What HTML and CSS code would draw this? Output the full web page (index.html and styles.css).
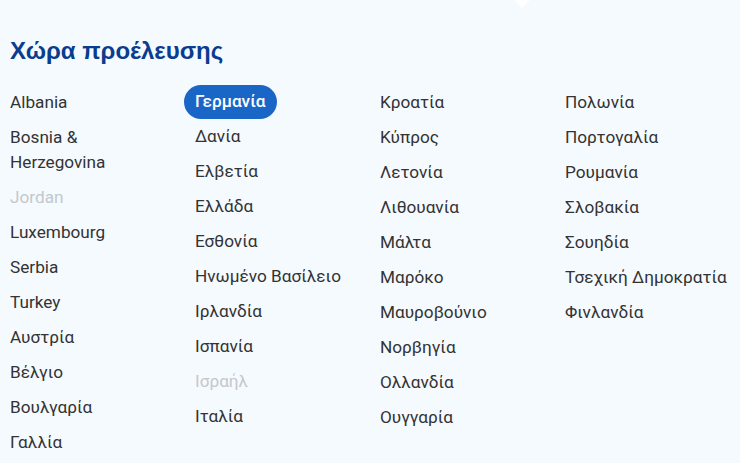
FILE: index.html
```html
<!DOCTYPE html>
<html lang="el">
  <head>
    <meta charset="UTF-8" />
    <meta name="viewport" content="width=device-width, initial-scale=1.0" />
    <title>Χώρα προέλευσης</title>
    <link rel="stylesheet" href="styles.css">
  </head>
  <body>
    <div class="panel">
      <span class="arrow"></span>
      <h2 class="title">Χώρα προέλευσης</h2>
      <div class="countries">
        <ul class="col">
          <li class="item">Albania</li>
          <li class="item">Bosnia &amp; Herzegovina</li>
          <li class="item disabled">Jordan</li>
          <li class="item">Luxembourg</li>
          <li class="item">Serbia</li>
          <li class="item">Turkey</li>
          <li class="item">Αυστρία</li>
          <li class="item">Βέλγιο</li>
          <li class="item">Βουλγαρία</li>
          <li class="item">Γαλλία</li>
        </ul>
        <ul class="col">
          <li class="item active">Γερμανία</li>
          <li class="item">Δανία</li>
          <li class="item">Ελβετία</li>
          <li class="item">Ελλάδα</li>
          <li class="item">Εσθονία</li>
          <li class="item">Ηνωμένο Βασίλειο</li>
          <li class="item">Ιρλανδία</li>
          <li class="item">Ισπανία</li>
          <li class="item disabled">Ισραήλ</li>
          <li class="item">Ιταλία</li>
        </ul>
        <ul class="col">
          <li class="item">Κροατία</li>
          <li class="item">Κύπρος</li>
          <li class="item">Λετονία</li>
          <li class="item">Λιθουανία</li>
          <li class="item">Μάλτα</li>
          <li class="item">Μαρόκο</li>
          <li class="item">Μαυροβούνιο</li>
          <li class="item">Νορβηγία</li>
          <li class="item">Ολλανδία</li>
          <li class="item">Ουγγαρία</li>
        </ul>
        <ul class="col last">
          <li class="item">Πολωνία</li>
          <li class="item">Πορτογαλία</li>
          <li class="item">Ρουμανία</li>
          <li class="item">Σλοβακία</li>
          <li class="item">Σουηδία</li>
          <li class="item">Τσεχική Δημοκρατία</li>
          <li class="item">Φινλανδία</li>
        </ul>
      </div>
    </div>
  </body>
</html>
```

FILE: styles.css
```css
html,
body {
  margin: 0;
  height: 100%;
  background: #f5faff;
  overflow: hidden;
}
.panel {
  position: relative;
  padding: 37px 0 0 10px;
  font-family: Roboto, "Noto Sans", sans-serif;
}
.arrow {
  position: absolute;
  top: -9px;
  left: 515px;
  width: 14px;
  height: 14px;
  background: #fff;
  transform: rotate(45deg);
}
.title {
  margin: 0 0 20px;
  font-family: "Liberation Sans", Arial, sans-serif;
  font-size: 24px;
  font-weight: bold;
  color: #0a3d8f;
}
.countries {
  display: flex;
  margin-left: -11px;
}
.col {
  list-style: none;
  margin: 0;
  padding: 0;
  width: 185px;
  display: flex;
  flex-direction: column;
  align-items: flex-start;
}
.col.last {
  white-space: nowrap;
}
.item {
  padding: 5px 11px;
  font-size: 17.2px;
  line-height: 25px;
  color: #333;
  border-radius: 17px;
}
.item.disabled {
  color: #c4c8cc;
}
.item.active {
  background: #1a66c6;
  color: #fff;
  font-weight: 500;
  padding: 4px 11px 5px;
}
```
